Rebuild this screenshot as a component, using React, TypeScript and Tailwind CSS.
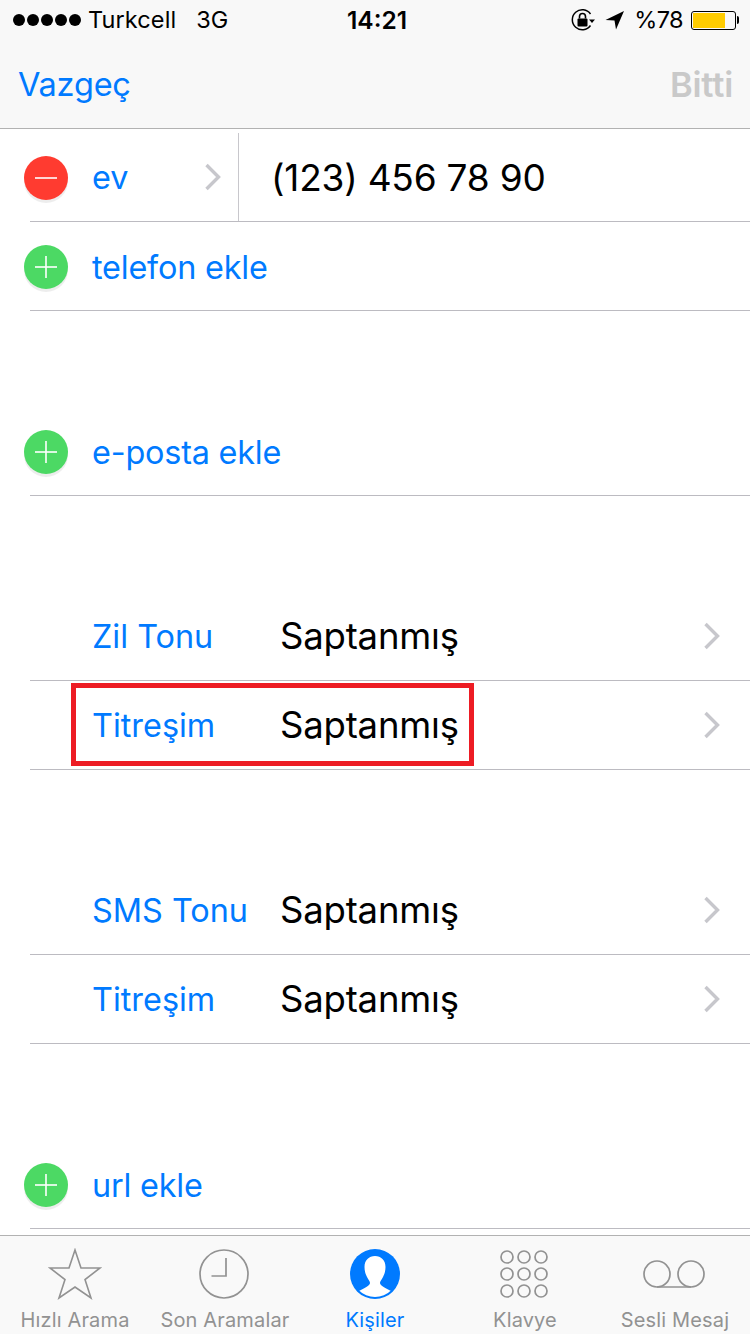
const F = { fontFamily: "Inter, 'Liberation Sans', sans-serif" };

function Chevron({ className = "" }: { className?: string }) {
  return (
    <svg width="18" height="28" viewBox="0 0 18 28" className={className}>
      <path d="M2.5 2 L14.5 14 L2.5 26" fill="none" stroke="#c7c7cc" strokeWidth="3.4" />
    </svg>
  );
}

function RoundBtn({ minus = false }: { minus?: boolean }) {
  return (
    <div
      className={`relative flex h-11 w-11 shrink-0 items-center justify-center rounded-full shadow-[0_3px_0_rgba(0,0,0,0.07)] ${minus ? "bg-[#ff3b30]" : "bg-[#4cd964]"}`}
    >
      <svg width="24" height="24" viewBox="0 0 24 24">
        <path d="M1 12 H23" stroke="#fff" strokeWidth="1.6" />
        {!minus && <path d="M12 1 V23" stroke="#fff" strokeWidth="1.6" />}
      </svg>
    </div>
  );
}

function AddRow({ label }: { label: string }) {
  return (
    <div className="ml-[30px] flex h-[89px] items-center border-b border-[#bcbbc1]">
      <div className="-ml-1.5 mt-[2px]"><RoundBtn /></div>
      <span className="ml-[24px] mt-[4px] text-[32.4px] leading-none tracking-[-0.2px] text-[#007aff]">{label}</span>
    </div>
  );
}

function ValueRow({ label, boxed = false }: { label: string; boxed?: boolean }) {
  return (
    <div className="relative ml-[30px] flex h-[89px] items-center border-b border-[#bcbbc1]">
      <span className="ml-[62px] mt-[2px] w-[188px] text-[32.4px] leading-none text-[#007aff]">{label}</span>
      <span className="mt-[1px] flex-1 text-[36.5px] leading-none tracking-[-0.2px] text-black">Saptanmış</span>
      <Chevron className="mr-[29px] mt-[-1px]" />
      {boxed && <div className="absolute left-[41px] top-[2px] h-[83px] w-[403px] border-[5px] border-[#ed1c24]" />}
    </div>
  );
}

function Tab({ label, active = false, children }: { label: string; active?: boolean; children: React.ReactNode }) {
  return (
    <div className="flex w-[150px] flex-col items-center">
      <div className="flex h-[50px] w-full items-center justify-center">{children}</div>
      <span className={`mt-[9px] text-[20px] leading-[24px] tracking-[0.15px] ${active ? "text-[#007aff]" : "text-[#929292]"}`}>{label}</span>
    </div>
  );
}

export default function App() {
  return (
    <div className="flex h-[1334px] w-[750px] flex-col overflow-hidden bg-white" style={F}>
      <header className="h-[129px] shrink-0 border-b border-[#b2b2b2] bg-[#f8f8f8]">
        <div className="relative flex h-[40px] items-center text-black">
          <div className="ml-[13px] flex gap-[2px]">
            {[0, 1, 2, 3, 4].map((i) => (
              <span key={i} className="h-[12px] w-[12px] rounded-full bg-black" />
            ))}
          </div>
          <span className="ml-[7px] text-[23.5px] leading-none tracking-[0.1px]">Turkcell</span>
          <span className="ml-[20px] text-[23.5px] leading-none">3G</span>
          <span className="absolute left-[347px] top-[8px] text-[24.5px] font-semibold leading-[24px]">14:21</span>
          <div className="ml-auto mr-[11px] flex items-center">
            <svg width="24" height="24" viewBox="0 0 24 24">
              <path d="M19.5 6 A10 10 0 1 0 19.5 17.5" fill="none" stroke="#000" strokeWidth="1.5" />
              <path d="M18 11.5 H24 L21 15 Z" fill="#000" />
              <rect x="6.5" y="10.5" width="10" height="8" rx="1" fill="#000" />
              <path d="M8.5 10.5 V8.5 A3 3 0 0 1 14.5 8.5 V10.5" fill="none" stroke="#000" strokeWidth="1.6" />
            </svg>
            <svg width="20" height="20" viewBox="0 0 20 20" className="ml-[10px]">
              <path d="M0.5 10 L19 1 L11 19.5 L9.5 10.5 Z" fill="#000" />
            </svg>
            <span className="ml-[9px] text-[23.5px] leading-none tracking-[-0.6px]">%78</span>
            <div className="ml-[8px] flex h-[19px] w-[45px] items-center rounded-[3px] border border-black p-[1px]">
              <div className="h-full w-[32px] bg-[#ffcc00]" />
            </div>
            <div className="ml-[1px] h-[8px] w-[2px] rounded-r-full bg-black" />
          </div>
        </div>
        <div className="flex h-[88px] items-center justify-between pl-[18px] pr-[17px]">
          <span className="mt-[3px] text-[32.5px] leading-none tracking-[-0.2px] text-[#007aff]">Vazgeç</span>
          <span className="mt-[2px] text-[34.5px] font-semibold leading-none tracking-[-0.2px] text-[#c9c9c9]">Bitti</span>
        </div>
      </header>

      <main className="h-[1106px] shrink-0">
        <div className="ml-[30px] flex h-[93px] items-center border-b border-[#bcbbc1]">
          <div className="-ml-1.5 mt-[6px]"><RoundBtn minus /></div>
          <span className="ml-[24px] mt-[6px] w-[112px] text-[32.4px] leading-none text-[#007aff]">ev</span>
          <Chevron className="mt-[4px]" />
          <div className="ml-[16px] mt-[4px] h-[88px] w-px self-start bg-[#c8c7cc]" />
          <span className="ml-[32px] mt-[4px] text-[37px] leading-none tracking-[-0.2px] text-black">(123) 456 78 90</span>
        </div>
        <AddRow label="telefon ekle" />
        <div className="h-[96px]" />
        <AddRow label="e-posta ekle" />
        <div className="h-[96px]" />
        <ValueRow label="Zil Tonu" />
        <ValueRow label="Titreşim" boxed />
        <div className="h-[96px]" />
        <ValueRow label="SMS Tonu" />
        <ValueRow label="Titreşim" />
        <div className="h-[96px]" />
        <AddRow label="url ekle" />
      </main>

      <nav className="flex h-[99px] shrink-0 items-start border-t border-[#b2b2b2] bg-[#f9f9f9] pt-[13px]">
        <Tab label="Hızlı Arama">
          <svg width="54" height="52" viewBox="0 0 54 52">
            <path d="M27 2 L33 20 L52 20 L37 31.5 L43 50 L27 39 L11 50 L17 31.5 L2 20 L21 20 Z" fill="none" stroke="#929292" strokeWidth="1.6" />
          </svg>
        </Tab>
        <Tab label="Son Aramalar">
          <svg width="50" height="50" viewBox="0 0 50 50" className="-ml-[2px]">
            <circle cx="25" cy="25" r="24" fill="none" stroke="#929292" strokeWidth="1.7" />
            <path d="M27 9 V27 H12.5" fill="none" stroke="#929292" strokeWidth="1.7" />
          </svg>
        </Tab>
        <Tab label="Kişiler" active>
          <svg width="50" height="50" viewBox="0 0 50 50">
            <defs>
              <clipPath id="c"><circle cx="25" cy="25" r="23" /></clipPath>
            </defs>
            <circle cx="25" cy="25" r="25" fill="#007aff" />
            <path
              clipPath="url(#c)"
              d="M25 7 C31 7 35.5 11 35.5 18 C35.5 22 34.5 25 33 28 C31.5 31 30 32 30 34 C30 37 36 39 41 42 L41 50 L9 50 L9 42 C14 39 20 37 20 34 C20 32 18.5 31 17 28 C15.5 25 14.5 22 14.5 18 C14.5 11 19 7 25 7 Z"
              fill="#fff"
            />
          </svg>
        </Tab>
        <Tab label="Klavye">
          <svg width="50" height="50" viewBox="0 0 50 50" className="-ml-[2px]">
            {[8, 25, 42].flatMap((y) =>
              [8, 25, 42].map((x) => (
                <circle key={`${x}-${y}`} cx={x} cy={y} r="6" fill="none" stroke="#929292" strokeWidth="1.7" />
              ))
            )}
          </svg>
        </Tab>
        <Tab label="Sesli Mesaj">
          <svg width="62" height="30" viewBox="0 0 62 30" className="-ml-[2px]">
            <circle cx="14" cy="15" r="13" fill="none" stroke="#929292" strokeWidth="1.7" />
            <circle cx="48" cy="15" r="13" fill="none" stroke="#929292" strokeWidth="1.7" />
            <path d="M14 28 H48" stroke="#929292" strokeWidth="1.7" />
          </svg>
        </Tab>
      </nav>
    </div>
  );
}
